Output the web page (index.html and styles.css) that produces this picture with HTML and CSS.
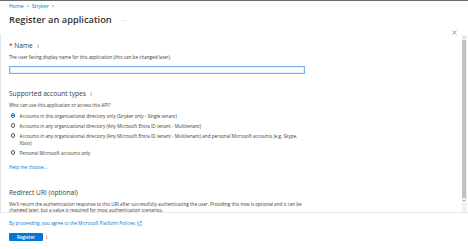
FILE: index.html
```html
<!DOCTYPE html>
<html>
<head>
<meta charset="utf-8">
<link rel="stylesheet" href="styles.css">
</head>
<body>
<div class="topline"></div>
<header class="header">
  <div class="head-left">
    <div class="crumbs"><span class="crumb">Home</span><span class="sep">&gt;</span><span class="crumb">Stryker</span><span class="sep">&gt;</span></div>
    <div class="title-row"><h1 class="title">Register an application</h1><span class="more">···</span></div>
  </div>
  <div class="close">
    <svg width="5" height="5" viewBox="0 0 10 10"><path d="M1 1L9 9M9 1L1 9" stroke="#7a7a7a" stroke-width="1.6" fill="none"/></svg>
  </div>
</header>
<main class="scroller">
  <div class="content">
    <div class="label"><span class="req">*</span> Name <span class="info">i</span></div>
    <div class="desc desc-name">The user facing display name for this application (this can be changed later).</div>
    <div class="input"></div>

    <div class="label label-sec">Supported account types <span class="info">i</span></div>
    <div class="desc desc-who">Who can use this application or access this API?</div>
    <div class="radios">
      <div class="radio-row"><span class="radio on"></span><span class="rtext">Accounts in this organizational directory only (Stryker only - Single tenant)</span></div>
      <div class="radio-row"><span class="radio"></span><span class="rtext">Accounts in any organizational directory (Any Microsoft Entra ID tenant - Multitenant)</span></div>
      <div class="radio-row"><span class="radio"></span><span class="rtext">Accounts in any organizational directory (Any Microsoft Entra ID tenant - Multitenant) and personal Microsoft accounts (e.g. Skype,<br>Xbox)</span></div>
      <div class="radio-row"><span class="radio"></span><span class="rtext">Personal Microsoft accounts only</span></div>
    </div>
    <div class="link help">Help me choose...</div>

    <div class="label label-redirect">Redirect URI (optional)</div>
    <div class="desc desc-redirect">We'll return the authentication response to this URI after successfully authenticating the user. Providing this now is optional and it can be<br>changed later, but a value is required for most authentication scenarios.</div>
  </div>
  <div class="scrollbar">
    <div class="arrow up"></div>
    <div class="thumb"></div>
    <div class="arrow down"></div>
  </div>
</main>
<footer class="footer">
  <div class="link policy">By proceeding, you agree to the Microsoft Platform Policies
    <svg class="ext" width="5" height="5" viewBox="0 0 10 10"><path d="M4 1.5H1.5V8.5H8.5V6M6 1H9V4M9 1L4.5 5.5" stroke="#0078d4" stroke-width="1" fill="none"/></svg>
  </div>
  <div class="actions"><button class="btn">Register</button><span class="info">i</span></div>
</footer>
</body>
</html>
```
FILE: styles.css
```css
html, body {
  margin: 0;
  padding: 0;
  background: #ffffff;
}
body {
  width: 468px;
  height: 249px;
  overflow: hidden;
  font-family: "Open Sans", "Noto Sans", sans-serif;
  color: #323130;
  display: flex;
  flex-direction: column;
}
.topline {
  height: 1px;
  background: #6b6b6b;
  flex: none;
}
.header {
  height: 33px;
  flex: none;
  display: flex;
  justify-content: space-between;
  padding: 0 9px;
}
.crumbs {
  margin-top: 2px;
  font-size: 5.2px;
  line-height: 7px;
  color: #0078d4;
  display: flex;
  gap: 2.5px;
}
.sep {
  color: #605e5c;
}
.title-row {
  margin-top: 4px;
  display: flex;
  align-items: center;
}
.title {
  margin: 0;
  font-size: 9.3px;
  line-height: 11px;
  font-weight: 600;
  color: #323130;
}
.more {
  margin-left: 9px;
  font-size: 6px;
  color: #a19f9d;
  letter-spacing: 0.3px;
}
.close {
  margin-top: 17px;
  margin-right: 2px;
  height: 6px;
}
.scroller {
  height: 178px;
  flex: none;
  display: flex;
  border-bottom: 1px solid #edebe9;
  border-left: 1px solid #e1e4ea;
}
.content {
  flex: 1;
  padding: 8px 0 0 8px;
  overflow: hidden;
}
.label {
  font-size: 6.6px;
  line-height: 8px;
  color: #3b3a39;
}
.req {
  color: #a4262c;
}
.info {
  color: #e0464e;
  font-size: 5px;
  margin-left: 3px;
  font-weight: 600;
}
.desc {
  font-size: 4.6px;
  line-height: 7px;
  color: #3b3a39;
}
.desc-name {
  margin-top: 4px;
}
.input {
  margin-top: 5px;
  width: 294px;
  height: 6px;
  border: 1px solid #79b1e8;
  box-shadow: inset 0 0 0 0.6px #cfe4f7;
}
.label-sec {
  margin-top: 16px;
}
.desc-who {
  margin-top: 4px;
}
.radios {
  margin-top: 3.5px;
  display: flex;
  flex-direction: column;
  gap: 3px;
}
.radio-row {
  display: flex;
  align-items: flex-start;
  font-size: 4.6px;
  line-height: 7px;
  color: #3b3a39;
}
.radio {
  flex: none;
  width: 4.6px;
  height: 4.6px;
  border: 0.7px solid #605e5c;
  border-radius: 50%;
  margin: 0.5px 0 0 1.5px;
  box-sizing: border-box;
  position: relative;
}
.radio.on {
  border-color: #0078d4;
}
.radio.on::after {
  content: "";
  position: absolute;
  left: 0.8px;
  top: 0.8px;
  width: 1.6px;
  height: 1.6px;
  border-radius: 50%;
  background: #0078d4;
}
.rtext {
  margin-left: 4.5px;
}
.link {
  color: #0078d4;
  font-size: 4.6px;
  line-height: 7px;
}
.help {
  margin-top: 7.5px;
}
.label-redirect {
  margin-top: 17.5px;
}
.desc-redirect {
  margin-top: 4px;
  line-height: 6.3px;
}
.scrollbar {
  width: 5px;
  margin-right: 1.5px;
  margin-top: 1px;
  background: #f1f1f1;
  display: flex;
  flex-direction: column;
}
.arrow {
  height: 5px;
  flex: none;
  position: relative;
}
.arrow::after {
  content: "";
  position: absolute;
  left: 1.3px;
  width: 0;
  height: 0;
  border-left: 1.2px solid transparent;
  border-right: 1.2px solid transparent;
}
.arrow.up::after {
  top: 1.6px;
  border-bottom: 1.4px solid #a3a3a3;
}
.arrow.down::after {
  top: 1.8px;
  border-top: 1.4px solid #505050;
}
.thumb {
  flex: none;
  height: 158px;
  margin: 0 0.5px;
  background: #c1c1c1;
}
.footer {
  flex: 1;
  padding: 6.5px 9px 0;
}
.policy {
  display: flex;
  align-items: center;
  gap: 2px;
}
.actions {
  margin-top: 6.5px;
  display: flex;
  align-items: center;
}
.btn {
  width: 34px;
  height: 8px;
  padding: 0;
  border: none;
  border-radius: 1px;
  background: #0078d4;
  color: #ffffff;
  font-family: "Open Sans", "Noto Sans", sans-serif;
  font-size: 4.6px;
  font-weight: 600;
  line-height: 8px;
}
```
